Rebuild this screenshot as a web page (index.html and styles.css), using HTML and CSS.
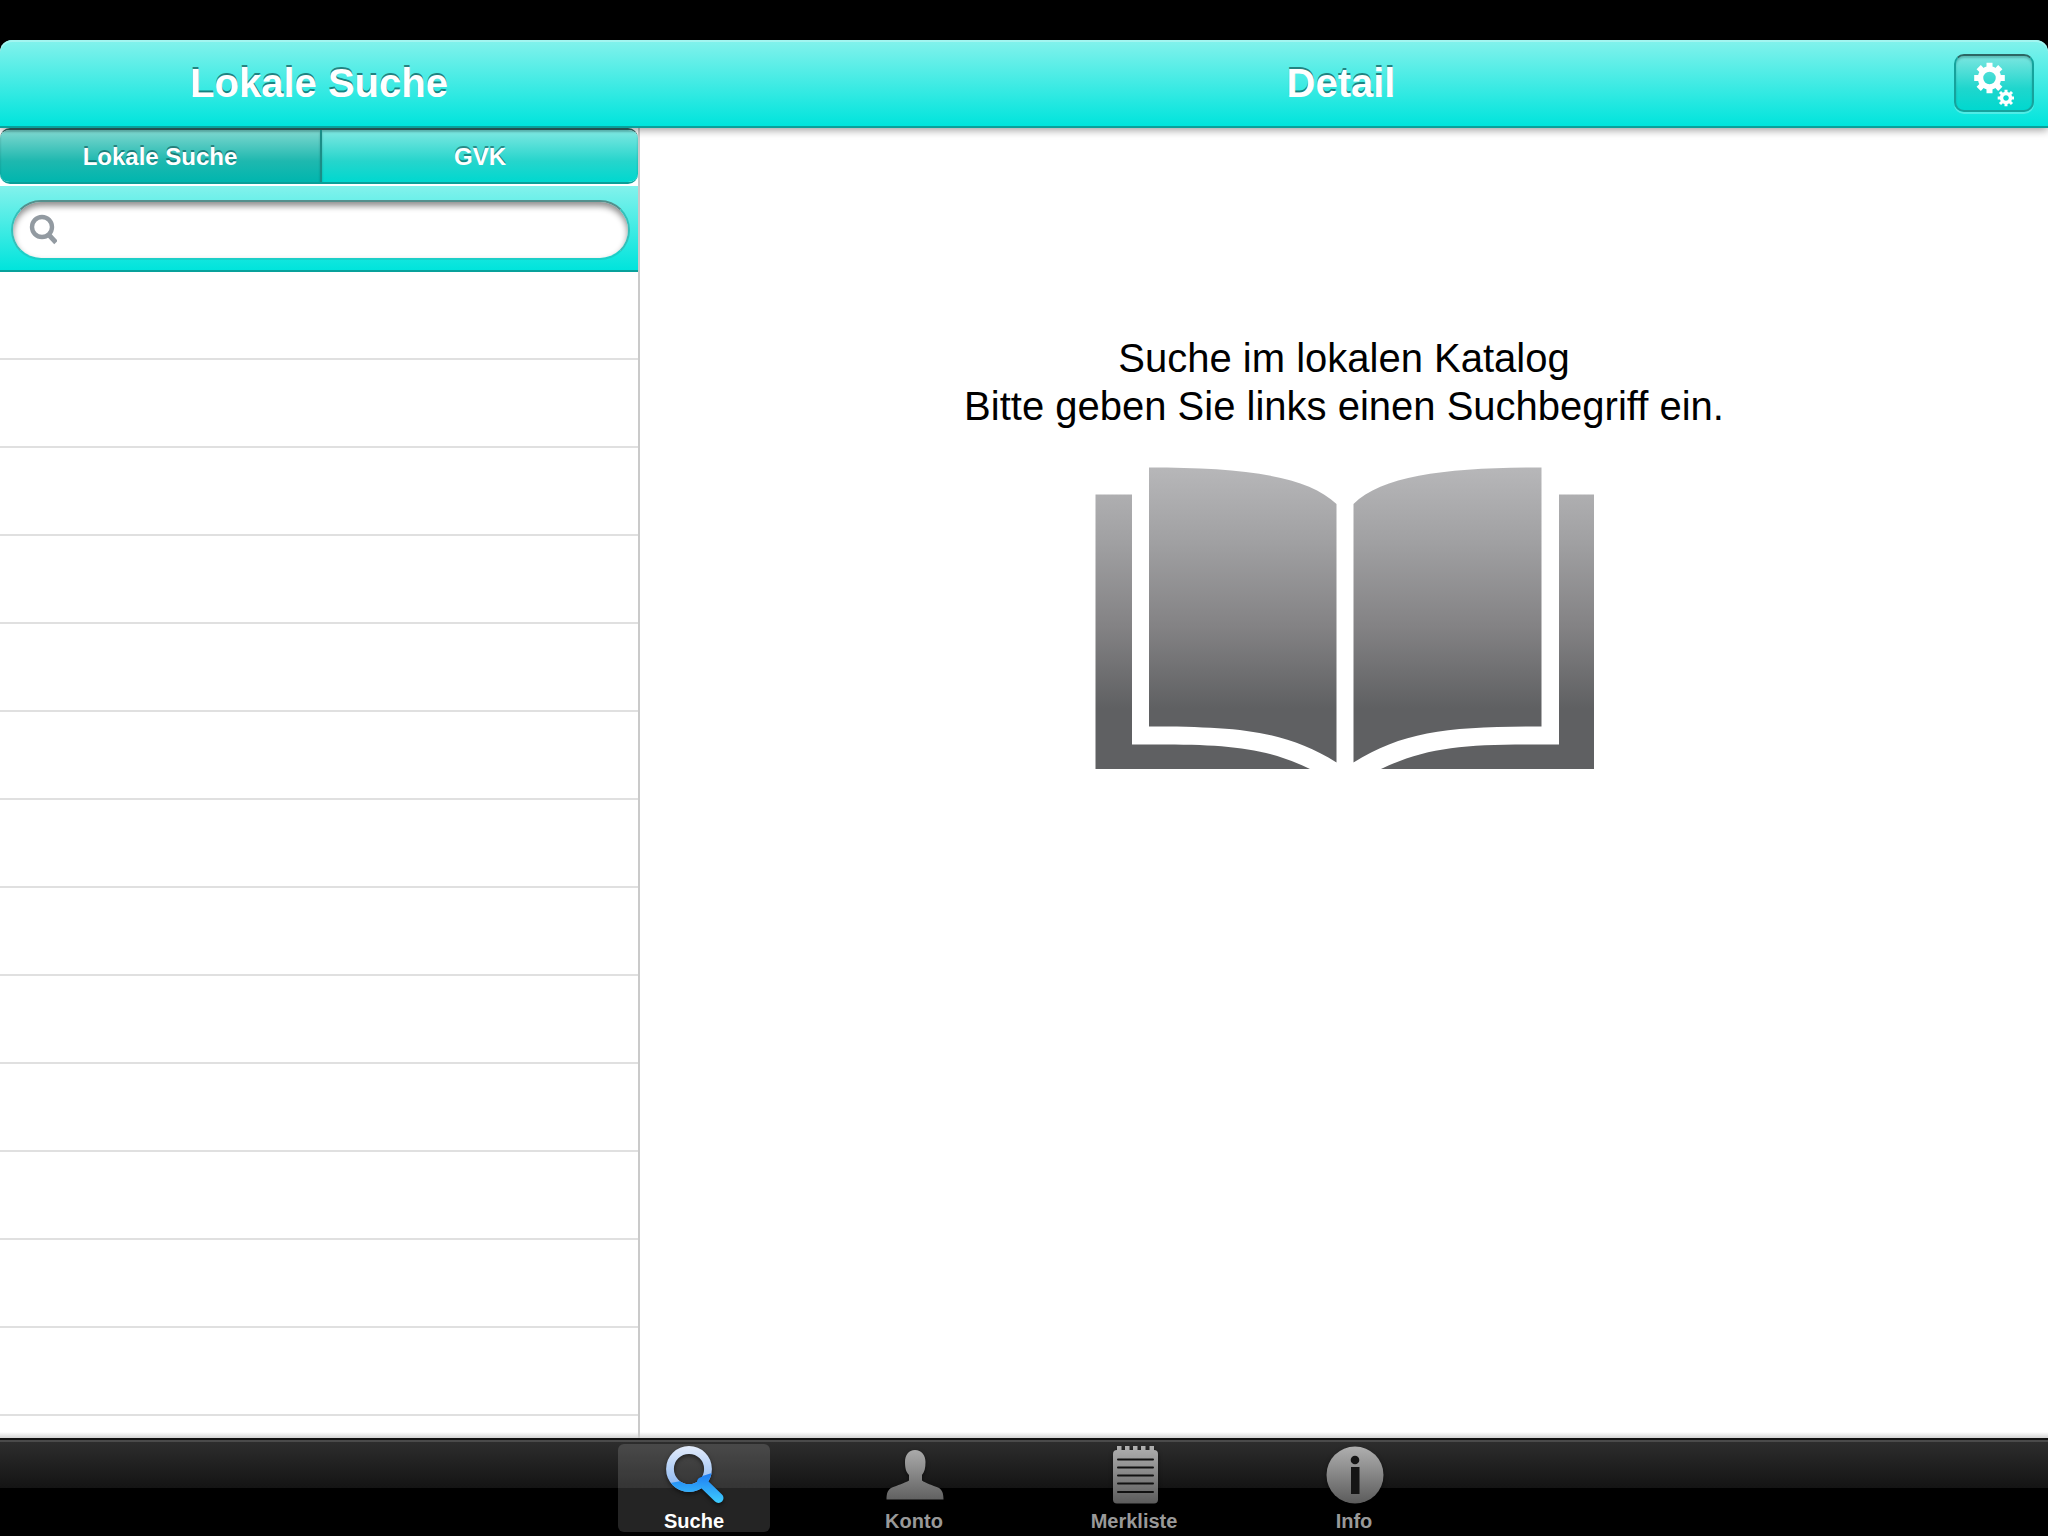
FILE: index.html
```html
<!DOCTYPE html>
<html lang="de">
<head>
<meta charset="utf-8">
<meta name="viewport" content="width=device-width, initial-scale=1">
<title>Lokale Suche</title>
<link rel="stylesheet" href="styles.css">
</head>
<body class="app">
<header class="navbar">
  <h1 class="navbar-title">Lokale Suche</h1>
  <div class="navbar-detail">
    <h2 class="navbar-title">Detail</h2>
    <button class="settings" type="button" aria-label="Einstellungen">
      <svg width="40" height="48" viewBox="0 0 40 48" fill="none" stroke="#fff">
        <g transform="translate(15.5 19)">
          <circle r="9" stroke-width="5.5"/>
          <path stroke-width="6" d="M0-10V-15.3M0 10V15.3M-10 0H-15.3M10 0H15.3M7.5 7.5L10.8 10.8M-7.5 7.5L-10.8 10.8M7.5-7.5L10.8-10.8M-7.5-7.5L-10.8-10.8"/>
        </g>
        <g transform="translate(32 39)">
          <circle r="4.5" stroke-width="3.4"/>
          <path stroke-width="3" d="M0-5V-8.300M0 5V8.300M-5 0H-8.300M5 0H8.300M3.5 3.5L6 6M-3.5 3.5L-6 6M3.5-3.5L6-6M-3.5-3.5L-6-6"/>
        </g>
      </svg>
    </button>
  </div>
</header>

<main class="split">
  <section class="sidebar">
    <div class="segments">
      <button class="segment segment-active" type="button" aria-pressed="true">Lokale Suche</button>
      <button class="segment" type="button" aria-pressed="false">GVK</button>
    </div>
    <form class="searchbar" role="search">
      <label class="searchfield">
        <svg width="28" height="32" viewBox="0 0 28 32" fill="none" stroke="#929aa1">
          <circle cx="13" cy="13" r="10" stroke-width="4.400"/>
          <path d="M19.5 20.5L27 28.500" stroke-width="4.800"/>
        </svg>
        <input class="searchinput" type="search" aria-label="Suchbegriff">
      </label>
    </form>
    <ul class="results">
      <li></li><li></li><li></li><li></li><li></li><li></li><li></li>
      <li></li><li></li><li></li><li></li><li></li><li></li><li></li>
    </ul>
  </section>

  <section class="detail">
    <p class="message">Suche im lokalen Katalog<br>Bitte geben Sie links einen Suchbegriff ein.</p>
    <svg class="book" width="499" height="302" viewBox="15 17 499 302">
      <defs>
        <linearGradient id="page" gradientUnits="userSpaceOnUse" x1="0" y1="17" x2="0" y2="319">
          <stop offset="0" stop-color="#b7b7b9"/>
          <stop offset=".25" stop-color="#a0a0a2"/>
          <stop offset=".53" stop-color="#838284"/>
          <stop offset=".8" stop-color="#5f6062"/>
          <stop offset="1" stop-color="#5f6062"/>
        </linearGradient>
      </defs>
      <g fill="url(#page)">
        <path d="M69 17.500C160 17.500 227 25 256.500 54V312.500C206 281 160 276.500 69 276.500Z"/>
        <path d="M461.500 17.500C370 17.500 303 25 273.500 54V312.500C324 281 370 276.500 461.500 276.500Z"/>
        <path d="M15.500 44.500H52V294.500C140 294 180 295 230 319H15.500Z"/>
        <path d="M514 44.500H479V294.500C391 294 351 295 301 319H514Z"/>
      </g>
    </svg>
  </section>
</main>

<nav class="tabbar">
  <button class="tab tab-active" type="button" aria-current="page">
    <svg class="tab-icon" viewBox="0 0 60 60">
      <defs>
        <linearGradient id="lens" gradientUnits="userSpaceOnUse" x1="0" y1="2" x2="0" y2="48">
          <stop offset="0" stop-color="#e4ecfb"/><stop offset="1" stop-color="#7fb0f0"/>
        </linearGradient>
        <linearGradient id="glow" gradientUnits="userSpaceOnUse" x1="0" y1="30" x2="0" y2="60">
          <stop offset="0" stop-color="#1f7df2"/><stop offset="1" stop-color="#3fd0ff"/>
        </linearGradient>
        <clipPath id="lower"><path d="M0 40C18 37 34 34 48 29L60 29V60H0Z"/></clipPath>
      </defs>
      <circle cx="25" cy="25" r="19" fill="none" stroke="url(#lens)" stroke-width="7.800"/>
      <g clip-path="url(#lower)" fill="none" stroke="url(#glow)">
        <circle cx="25" cy="25" r="19" stroke-width="7.800"/>
        <path d="M38 38L54.500 54" stroke-width="10" stroke-linecap="round"/>
      </g>
    </svg>
    <span>Suche</span>
  </button>
  <button class="tab" type="button">
    <svg class="tab-icon" viewBox="0 0 60 60">
      <defs>
        <linearGradient id="metal" gradientUnits="userSpaceOnUse" x1="0" y1="2" x2="0" y2="59">
          <stop offset="0" stop-color="#b0b0b0"/><stop offset="1" stop-color="#5c5c5c"/>
        </linearGradient>
      </defs>
      <path fill="url(#metal)" d="M31 6C37.500 6 41.500 11 41.500 18C41.500 24 40.500 28 38 31V36.500C41 39 49 41.500 54 43.500C58 45.500 59.500 49 59.500 55.500H2.500C2.500 49 4 45.500 8 43.500C13 41.500 21 39 25 36.500V31C22 28 21 24 21 18C21 11 24.500 6 31 6Z"/>
    </svg>
    <span>Konto</span>
  </button>
  <button class="tab" type="button">
    <svg class="tab-icon" viewBox="0 0 60 60">
      <path fill="url(#metal)" d="M13 6V2H17.500V6H21V2H25.500V6H29V2H33.500V6H37V2H41.500V6H45.500V2H50V6Q54 6 54 10V55.500Q54 59.500 50 59.500H13Q9 59.500 9 55.500V10Q9 6 13 6Z"/>
      <path stroke="#111" stroke-width="2" stroke-linecap="round" d="M14 15.500H49M14 23.500H49M14 31.500H49M14 39.500H49M14 48H49"/>
    </svg>
    <span>Merkliste</span>
  </button>
  <button class="tab" type="button">
    <svg class="tab-icon" viewBox="0 0 60 60">
      <circle cx="31" cy="31" r="28.500" fill="url(#metal)"/>
      <g fill="#151515"><circle cx="31" cy="16" r="4.300"/><path d="M27 23H35.500V50H27Z"/></g>
    </svg>
    <span>Info</span>
  </button>
</nav>
</body>
</html>
```
FILE: styles.css
```css
* {
  box-sizing: border-box;
}

.app {
  display: flex;
  flex-direction: column;
  height: 100vh;
  margin: 0;
  padding-top: 40px;
  background: #000;
  color: #000;
  font-family: "Liberation Sans", Arial, Helvetica, sans-serif;
}

button,
input {
  margin: 0;
  padding: 0;
  border: 0;
  background: none;
  font: inherit;
}

/* Navigation bar */
.navbar {
  position: relative;
  z-index: 1;
  display: grid;
  grid-template-columns: 638px 1fr;
  flex: none;
  height: 88px;
  border-bottom: 2px solid #08a19b;
  border-radius: 12px 12px 0 0;
  background: linear-gradient(#83f2ec, #00e4dc);
  box-shadow: inset 0 2px #a3f5f0, 0 2px 8px rgba(0, 0, 0, .4);
}

.navbar-title {
  align-self: center;
  margin: 0;
  color: #fff;
  font-size: 40px;
  line-height: 48px;
  text-align: center;
  text-shadow: 0 -2px rgba(0, 60, 60, .6);
}

.navbar-detail {
  display: grid;
  grid-template-columns: 90px 1fr 94px;
}

.navbar-detail .navbar-title {
  grid-column: 2;
}

.settings {
  display: flex;
  align-items: center;
  justify-content: center;
  align-self: center;
  width: 80px;
  height: 58px;
  border: 2px solid #16a29c;
  border-top-color: #2c6663;
  border-radius: 10px;
  background: linear-gradient(#7be6e0, #1fd6cd 60%, #00d8cf);
  box-shadow: inset 0 2px 2px rgba(0, 60, 60, .25), 0 2px rgba(255, 255, 255, .25);
}

/* Split view */
.split {
  display: grid;
  grid-template-columns: 640px 1fr;
  grid-template-rows: minmax(0, 1fr);
  flex: 1;
  min-height: 0;
  background: linear-gradient(transparent, #d4d4d4) bottom / 100% 6px no-repeat #fff;
}

.sidebar {
  display: flex;
  flex-direction: column;
  min-height: 0;
  border-right: 2px solid #cacaca;
}

.segments {
  position: relative;
  z-index: 2;
  display: grid;
  grid-template-columns: 322px 1fr;
  flex: none;
  height: 56px;
  margin-bottom: 2px;
  overflow: hidden;
  border: solid #0a9f98;
  border-width: 2px 0;
  border-top-color: #24514f;
  border-radius: 10px;
}

.segment {
  padding-top: 2px;
  background: linear-gradient(#80e8e2, #26d5cc 60%, #00d8cf);
  box-shadow: inset 0 2px 2px rgba(0, 50, 50, .3);
  color: #fff;
  font-size: 24px;
  font-weight: bold;
  line-height: 28px;
  text-shadow: 0 -2px rgba(0, 60, 60, .5);
}

.segment-active {
  border-right: 2px solid #1b8d87;
  background: linear-gradient(#80d8d0, #1eb8af 60%, #00b6ae);
}

.searchbar {
  flex: none;
  padding: 14px 8px 10px 11px;
  border-bottom: 2px solid #08a19b;
  background: linear-gradient(#83f2ec, #00e4dc);
}

.searchfield {
  display: flex;
  align-items: center;
  gap: 10px;
  height: 60px;
  padding: 0 20px 0 16px;
  border: 2px solid #35bfb9;
  border-top-color: #53908d;
  border-bottom-color: #1ccfc8;
  border-radius: 30px;
  background: #fff;
  box-shadow: inset 0 4px 6px rgba(0, 0, 0, .45);
}

.searchinput {
  flex: 1;
  min-width: 0;
  outline: 0;
  font-size: 28px;
}

.results {
  flex: 1;
  min-height: 0;
  margin: 0;
  padding: 0;
  overflow: hidden;
  list-style: none;
}

.results li {
  height: 88px;
  border-bottom: 2px solid #e0e0e0;
}

/* Detail pane */
.detail {
  display: flex;
  flex-direction: column;
  align-items: center;
  gap: 37px;
  padding-top: 206px;
}

.message {
  margin: 0;
  font-size: 40px;
  line-height: 48px;
  text-align: center;
}

/* Tab bar */
.tabbar {
  display: flex;
  justify-content: center;
  gap: 68px;
  flex: none;
  padding: 4px 0;
  border-top: 2px solid #111;
  background: linear-gradient(#2e2e2e, #141414) 0 0 / 100% 48px no-repeat #000;
  box-shadow: inset 0 2px #4a4a4a;
}

.tab {
  display: flex;
  flex-direction: column;
  align-items: center;
  gap: 5px;
  width: 152px;
  height: 88px;
  border-radius: 6px;
  color: #999;
  font-size: 20px;
  font-weight: bold;
  line-height: 24px;
}

.tab-active {
  background: rgba(255, 255, 255, .14);
  color: #fff;
}

.tab-icon {
  flex: none;
  width: 60px;
  height: 60px;
  filter: drop-shadow(0 2px 2px rgba(0, 0, 0, .5));
}
```
